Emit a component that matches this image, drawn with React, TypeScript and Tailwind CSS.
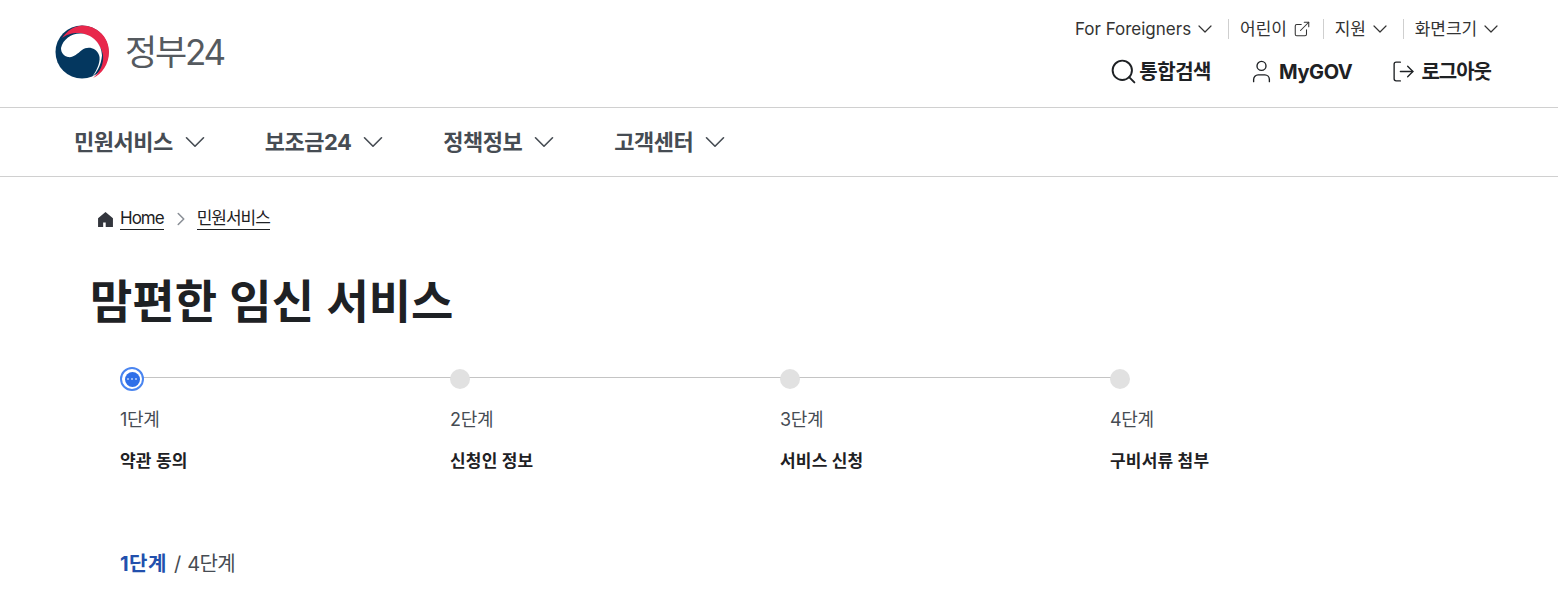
import React from 'react';
import { ChevronDown, ChevronRight, ExternalLink, Search, User, LogOut } from 'lucide-react';

const font = "font-['Inter','Noto_Sans_CJK_KR',sans-serif]";

const utilLinks = [
  { label: 'For Foreigners', icon: 'down' },
  { label: '어린이', icon: 'ext' },
  { label: '지원', icon: 'down' },
  { label: '화면크기', icon: 'down' },
];

const navItems = ['민원서비스', '보조금24', '정책정보', '고객센터'];

const steps = [
  { no: '1단계', title: '약관 동의', active: true },
  { no: '2단계', title: '신청인 정보', active: false },
  { no: '3단계', title: '서비스 신청', active: false },
  { no: '4단계', title: '구비서류 첨부', active: false },
];

const Logo = () => (
  <div className="flex items-center gap-[15px]">
    <svg width="56" height="54" viewBox="0 0 56 54">
      <circle cx="28" cy="27" r="26.5" fill="#04375f" />
      <path d="M8 13C13 6 20 1 28 .5 43 .5 55 12 55 27c0 12-7 22-16 26 7-6 11-14 10-23C47 18 35 8 24 8 17 8 12 10 8 13z" fill="#e8274b" />
      <path d="M7 23C9 14 18 8 27 8.500c12 1 21 11 21 22-1 10-5 17-10 21.500 6-8 9-17 7-22-3-8-12-9-17-5-5 4-9 8-14 7-4-1-7-4-7-9z" fill="#fff" />
    </svg>
    <span className="text-[35px] leading-none text-[#555a5f] tracking-[-2.2px] font-normal pt-px">정부24</span>
  </div>
);

const Header = () => (
  <header className="h-[108px] border-b border-[#d0d0d0] pl-[54px] pr-[55px] flex justify-between">
    <div className="pt-[25px]">
      <Logo />
    </div>
    <div className="flex flex-col items-end pt-[19px]">
      <ul className="flex items-center h-[20px] text-[#333] text-[17px] leading-none">
        {utilLinks.map((link, i) => (
          <li key={link.label} className={`flex items-center ${i > 0 ? 'ml-[11px] pl-[11px] border-l border-[#cfcfcf] h-[20px]' : ''}`}>
            <span className={i === 0 ? 'tracking-[0px]' : 'tracking-[-0.1px]'}>{link.label}</span>
            {link.icon === 'down' ? (
              <ChevronDown className="w-[24px] h-[24px] ml-[2px] shrink-0" strokeWidth={1.2} />
            ) : (
              <ExternalLink className="w-[18px] h-[18px] ml-[6px] mr-px" strokeWidth={1.4} />
            )}
          </li>
        ))}
      </ul>
      <div className="flex items-center mt-[18px] pr-[12px] text-[#1e2124] text-[20px] font-bold leading-none">
        <span className="flex items-center gap-px tracking-[-0.5px]">
          <Search className="w-[29px] h-[29px]" strokeWidth={1.6} />
          통합검색
        </span>
        <span className="flex items-center gap-[4px] ml-[37px] tracking-[-0.4px]">
          <User className="w-[27px] h-[27px]" strokeWidth={1.2} />
          MyGOV
        </span>
        <span className="flex items-center gap-[5px] ml-[39px] tracking-[-1px]">
          <LogOut className="w-[25px] h-[25px]" strokeWidth={1.3} />
          로그아웃
        </span>
      </div>
    </div>
  </header>
);

const Nav = () => (
  <nav className="h-[69px] border-b border-[#d0d0d0] pl-[74px] flex items-center gap-[53px]">
    {navItems.map((item) => (
      <div key={item} className="flex items-center gap-[5px] text-[22px] font-bold text-[#464c53] tracking-[-0.5px]">
        {item}
        <ChevronDown className="w-[34px] h-[34px]" strokeWidth={1.15} />
      </div>
    ))}
  </nav>
);

const Breadcrumb = () => (
  <div className="flex items-center pl-[97px] pt-[22px] h-[62px] text-[17px] text-[#1e2124] leading-none">
    <svg width="17" height="17" viewBox="0 0 16 16" fill="#33363d" className="mr-[6px]">
      <path d="M8 1 1 6.800V15h4.800v-4.200h2.400V15H15V6.800z" />
    </svg>
    <span className="border-b border-[#1e2124] pb-[2px] pt-px tracking-[-1px]">Home</span>
    <ChevronRight className="w-[22px] h-[22px] ml-[6px] mr-[5px] text-[#8a8f96]" strokeWidth={1.7} />
    <span className="border-b border-[#1e2124] pb-[2px] pt-px tracking-[-1px]">민원서비스</span>
  </div>
);

const Stepper = () => (
  <ol className="grid grid-cols-[330px_330px_330px_1fr] ml-[120px] mt-[36px]">
    {steps.map((step, i) => (
      <li key={step.no} className="flex flex-col">
        <div className="relative h-[24px] flex items-center">
          {i < steps.length - 1 && <div className="absolute left-[12px] right-[-12px] top-[10px] h-px bg-[#c4c4c4]" />}
          {step.active ? (
            <div className="relative w-[24px] h-[24px] rounded-full border-2 border-[#4a85f0] bg-white flex items-center justify-center">
              <div className="w-[15px] h-[15px] rounded-full bg-[#2f6fe8] flex items-center justify-center gap-[2px]">
                <i className="w-[2px] h-[2px] rounded-full bg-[#b9d0fa]" />
                <i className="w-[2px] h-[2px] rounded-full bg-[#b9d0fa]" />
                <i className="w-[2px] h-[2px] rounded-full bg-[#b9d0fa]" />
              </div>
            </div>
          ) : (
            <div className="relative w-[20px] h-[20px] rounded-full bg-[#e1e1e1]" />
          )}
        </div>
        <div className="mt-[17px] text-[18px] leading-[24px] text-[#464c53] tracking-[-0.3px]">{step.no}</div>
        <div className="mt-[17px] text-[17px] leading-[24px] font-bold text-[#1e2124] tracking-[0.2px]">{step.title}</div>
      </li>
    ))}
  </ol>
);

export default function App() {
  return (
    <div className={`${font} w-[1558px] h-[606px] overflow-hidden bg-white`}>
      <Header />
      <Nav />
      <Breadcrumb />
      <h1 className="ml-[90px] mt-[32px] text-[46px] leading-[60px] font-bold text-[#1e2124] [word-spacing:1.5px]">맘편한 임신 서비스</h1>
      <Stepper />
      <div className="ml-[120px] mt-[77px] text-[20px] leading-[28px] text-[#464c53]">
        <span className="font-bold text-[#2250ad] tracking-[0.5px]">1단계</span>
        <span className="ml-[7px] mr-[6px]">/</span>
        <span className="tracking-[-0.6px]">4단계</span>
      </div>
    </div>
  );
}
